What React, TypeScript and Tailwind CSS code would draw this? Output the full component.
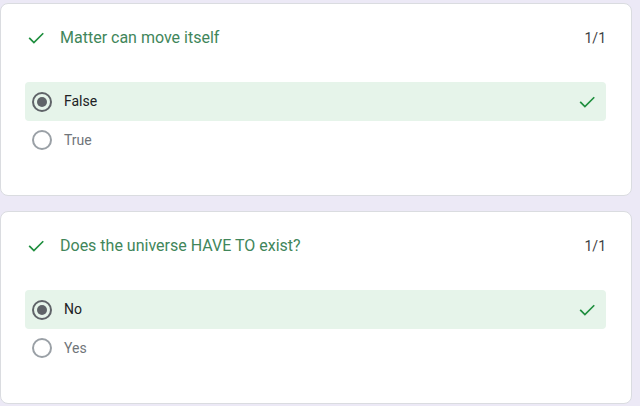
import React from "react";

function Check({ className }: { className?: string }) {
  return (
    <svg viewBox="0 0 24 24" className={className} fill="none">
      <path d="M4.5 12.5l5 5L20 7" stroke="currentColor" strokeWidth="2" strokeLinecap="square" />
    </svg>
  );
}

function Radio({ checked }: { checked: boolean }) {
  return (
    <div
      className={
        "w-5 h-5 rounded-full border-2 flex items-center justify-center shrink-0 " +
        (checked ? "border-[#5f6368]" : "border-[#9aa0a6]")
      }
    >
      {checked && <div className="w-[10px] h-[10px] rounded-full bg-[#5f6368]" />}
    </div>
  );
}

function Card({ title, correct, other }: { title: string; correct: string; other: string }) {
  return (
    <div className="w-[632px] h-[193px] bg-white rounded-lg border border-[#dadce0] pt-[23px]">
      <div className="flex items-center h-[22px] pl-[25px] pr-[25px]">
        <Check className="w-5 h-5 text-[#1e8e3e]" />
        <div className="ml-[14px] text-[16px] text-[#41865a]">{title}</div>
        <div className="ml-auto text-[14px] text-[#3c4043]">1/1</div>
      </div>
      <div className="mt-[33px] ml-6 mr-[25px] h-[39px] rounded bg-[#e6f4ea] flex items-center pl-[7px] pr-[9px]">
        <Radio checked />
        <div className="ml-3 text-[14px] text-[#202124]">{correct}</div>
        <Check className="ml-auto w-5 h-5 text-[#1e8e3e]" />
      </div>
      <div className="ml-6 h-[38px] flex items-center pl-[7px]">
        <Radio checked={false} />
        <div className="ml-3 text-[14px] text-[#70757a]">{other}</div>
      </div>
    </div>
  );
}

export default function App() {
  return (
    <div
      className="w-[640px] h-[406px] bg-[#ece9f6] pt-[3px] flex flex-col gap-[15px] overflow-hidden"
      style={{ fontFamily: "Roboto, 'Liberation Sans', sans-serif" }}
    >
      <Card title="Matter can move itself" correct="False" other="True" />
      <Card title="Does the universe HAVE TO exist?" correct="No" other="Yes" />
    </div>
  );
}
